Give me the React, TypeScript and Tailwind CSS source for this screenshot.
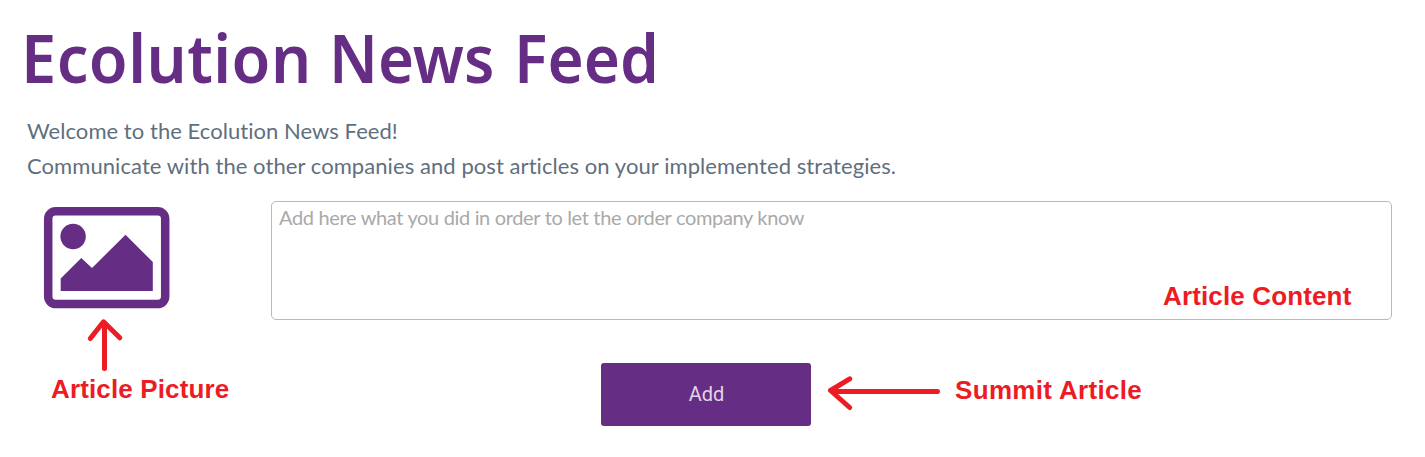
import React from "react";

const Note = ({ text, className }: { text: string; className: string }) => (
  <span
    className={`block whitespace-nowrap font-['Liberation_Sans',sans-serif] text-[26px] leading-[30px] font-bold text-[#ed1c24] ${className}`}
  >
    {text}
  </span>
);

export default function App() {
  return (
    <main className="flex h-[457px] w-[1425px] flex-col overflow-hidden bg-white font-['Lato',sans-serif] [font-variant-ligatures:none]">
      <h1 className="flex h-[113px] shrink-0 pt-[12px] pl-[21px] font-['Noto_Sans',sans-serif] text-[66px] leading-[90px] font-semibold whitespace-nowrap text-[#662d84]">
        <span className="w-[308px] origin-left scale-x-[0.955] tracking-[0.5px]">Ecolution</span>
        <span className="w-[185px] origin-left scale-x-[0.935]">News</span>
        <span className="origin-left scale-x-[0.94]">Feed</span>
      </h1>
      <p className="h-[88px] shrink-0 pl-[27px] text-[22px] leading-[35px] tracking-[0.07px] whitespace-nowrap text-[#5f6f7e]">
        <span className="tracking-[0.05px]">Welcome to the Ecolution News Feed!</span>
        <br />
        Communicate with the other companies and post articles on your implemented strategies.
      </p>
      <section className="flex">
        <div className="flex w-[271px] shrink-0 flex-col">
          <svg width="271" height="173" viewBox="0 201 271 173" aria-label="Article picture">
            <rect x="48.2" y="211.3" width="117" height="92.8" rx="7.5" fill="none" stroke="#662d84" strokeWidth="8.5" />
            <circle cx="73.1" cy="236.5" r="12.7" fill="#662d84" />
            <path d="M60.7 278.5 81.3 258 92 268 125.5 234.7 152.8 262v29H60.7Z" fill="#662d84" />
            <path d="M104.5 368.5V323M90.3 338.5 103.5 321.8 119.8 337.8" fill="none" stroke="#ed1c24" strokeWidth="5" strokeLinecap="round" strokeLinejoin="round" />
          </svg>
          <Note text="Article Picture" className="pl-[51px] tracking-[0.14px]" />
        </div>
        <div className="flex flex-col">
          <div className="flex h-[119px] w-[1121px] flex-col rounded-[5px] border border-[#b9b9b9] pt-[2px] pl-[7px] text-[20px] leading-[26px] text-[#a9a9a9]">
            <span className="tracking-[-0.34px] whitespace-nowrap">Add here what you did in order to let the order company know</span>
            <Note text="Article Content" className="mt-[51px] pl-[884px] tracking-[0.14px]" />
          </div>
          <div className="mt-[43px] flex pl-[330px]">
            <button className="h-[63px] w-[210px] rounded-[3px] bg-[#662d84] pb-[2px] pl-[1px] font-['Roboto',sans-serif] text-[20px] text-[#e0d5e6]">Add</button>
            <svg className="ml-[14px]" width="120" height="63" viewBox="825 363 120 63">
              <path d="M937.5 391.5H833M849.7 378.8 830.5 390.5 849.7 407.5" fill="none" stroke="#ed1c24" strokeWidth="5" strokeLinecap="round" strokeLinejoin="round" />
            </svg>
            <Note text="Summit Article" className="mt-[12px] ml-[10px] tracking-[0.33px]" />
          </div>
        </div>
      </section>
    </main>
  );
}
